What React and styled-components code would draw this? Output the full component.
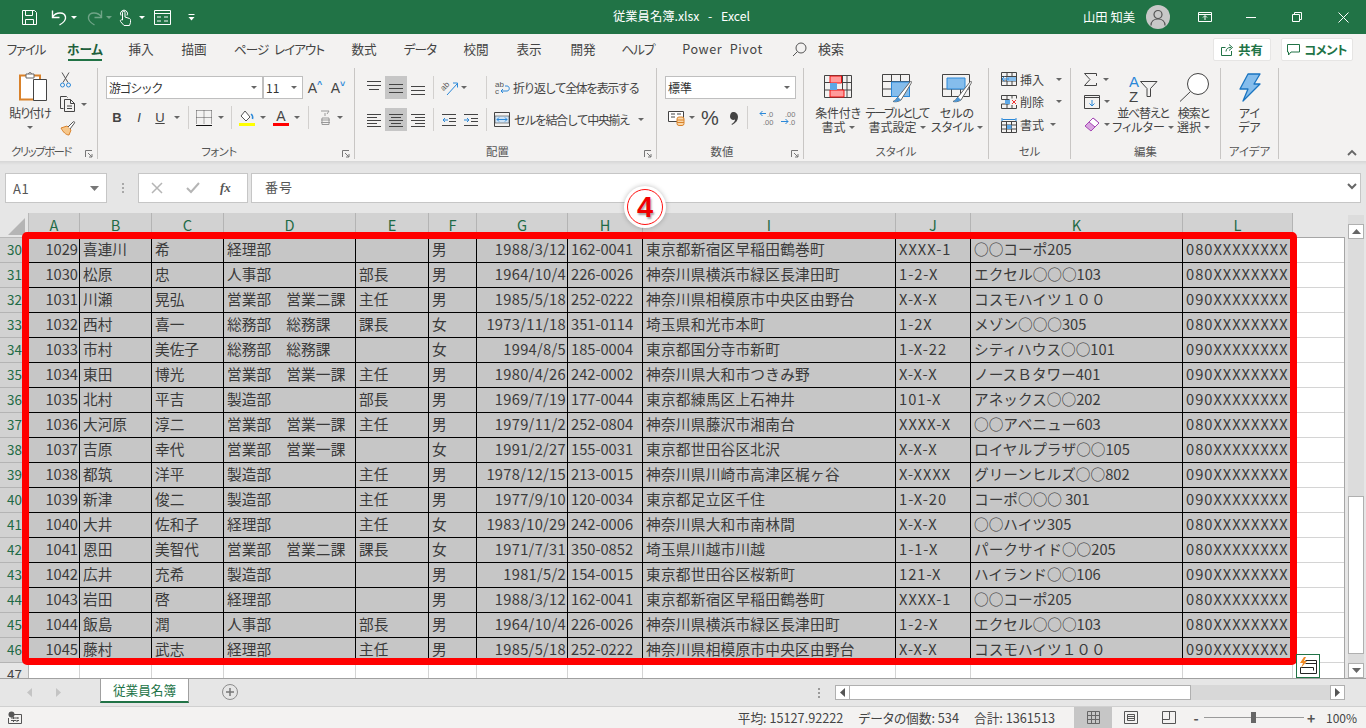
import React from "react";
import styled, { createGlobalStyle } from "styled-components";

const FONT = `"Noto Sans CJK JP", "Noto Sans", sans-serif`;

// name, width, right aligned, extra letter spacing
const COLUMNS = [
  ["A", 51, true, 0],
  ["B", 72, false, 0],
  ["C", 72, false, 0],
  ["D", 132, false, 0.15],
  ["E", 73, false, 0],
  ["F", 48, false, 0],
  ["G", 91, true, 0.3],
  ["H", 75, false, 0],
  ["I", 253, false, 0.25],
  ["J", 75, false, 1],
  ["K", 212, false, 0],
  ["L", 110, false, 1],
];

const ROWS = [
  [30, "1029", "喜連川", "希", "経理部", "", "男", "1988/3/12", "162-0041", "東京都新宿区早稲田鶴巻町", "XXXX-1", "○○コーポ205", "080XXXXXXXX"],
  [31, "1030", "松原", "忠", "人事部", "部長", "男", "1964/10/4", "226-0026", "神奈川県横浜市緑区長津田町", "1-2-X", "エクセル○○○103", "080XXXXXXXX"],
  [32, "1031", "川瀬", "晃弘", "営業部　営業二課", "主任", "男", "1985/5/18", "252-0222", "神奈川県相模原市中央区由野台", "X-X-X", "コスモハイツ１００", "090XXXXXXXX"],
  [33, "1032", "西村", "喜一", "総務部　総務課", "課長", "女", "1973/11/18", "351-0114", "埼玉県和光市本町", "1-2X", "メゾン○○○305", "080XXXXXXXX"],
  [34, "1033", "市村", "美佐子", "総務部　総務課", "", "女", "1994/8/5", "185-0004", "東京都国分寺市新町", "1-X-22", "シティハウス○○101", "090XXXXXXXX"],
  [35, "1034", "東田", "博光", "営業部　営業一課", "主任", "男", "1980/4/26", "242-0002", "神奈川県大和市つきみ野", "X-X-X", "ノースＢタワー401", "090XXXXXXXX"],
  [36, "1035", "北村", "平吉", "製造部", "部長", "男", "1969/7/19", "177-0044", "東京都練馬区上石神井", "101-X", "アネックス○○202", "090XXXXXXXX"],
  [37, "1036", "大河原", "淳二", "営業部　営業一課", "主任", "男", "1979/11/2", "252-0804", "神奈川県藤沢市湘南台", "XXXX-X", "○○アベニュー603", "080XXXXXXXX"],
  [38, "1037", "吉原", "幸代", "営業部　営業一課", "", "女", "1991/2/27", "155-0031", "東京都世田谷区北沢", "X-X-X", "ロイヤルプラザ○○105", "080XXXXXXXX"],
  [39, "1038", "都筑", "洋平", "製造部", "主任", "男", "1978/12/15", "213-0015", "神奈川県川崎市高津区梶ヶ谷", "X-XXXX", "グリーンヒルズ○○802", "090XXXXXXXX"],
  [40, "1039", "新津", "俊二", "製造部", "主任", "男", "1977/9/10", "120-0034", "東京都足立区千住", "1-X-20", "コーポ○○○ 301", "090XXXXXXXX"],
  [41, "1040", "大井", "佐和子", "経理部", "主任", "女", "1983/10/29", "242-0006", "神奈川県大和市南林間", "X-X-X", "○○ハイツ305", "080XXXXXXXX"],
  [42, "1041", "恩田", "美智代", "営業部　営業二課", "課長", "女", "1971/7/31", "350-0852", "埼玉県川越市川越", "1-1-X", "パークサイド○○205", "080XXXXXXXX"],
  [43, "1042", "広井", "充希", "製造部", "", "男", "1981/5/2", "154-0015", "東京都世田谷区桜新町", "121-X", "ハイランド○○106", "090XXXXXXXX"],
  [44, "1043", "岩田", "啓", "経理部", "", "男", "1988/3/12", "162-0041", "東京都新宿区早稲田鶴巻町", "XXXX-1", "○○コーポ205", "080XXXXXXXX"],
  [45, "1044", "飯島", "潤", "人事部", "部長", "男", "1964/10/4", "226-0026", "神奈川県横浜市緑区長津田町", "1-2-X", "エクセル○○○103", "080XXXXXXXX"],
  [46, "1045", "藤村", "武志", "経理部", "主任", "男", "1985/5/18", "252-0222", "神奈川県相模原市中央区由野台", "X-X-X", "コスモハイツ１００", "090XXXXXXXX"],
];

// label, width, active, letter spacing
const TABS = [
  ["ファイル", 52, false, -1.3],
  ["ホーム", 66, true, 0],
  ["挿入", 46, false, 0],
  ["描画", 60, false, 0],
  ["ページ レイアウト", 110, false, -1],
  ["数式", 60, false, 0],
  ["データ", 52, false, -0.8],
  ["校閲", 60, false, 0],
  ["表示", 46, false, 0],
  ["開発", 62, false, 0],
  ["ヘルプ", 48, false, -1],
  ["Power Pivot", 121, false, 0.6],
];

const GlobalStyle = createGlobalStyle`
  html, body {
    margin: 0;
    padding: 0;
    overflow: hidden;
    background: #e6e6e6;
  }
  * {
    box-sizing: border-box;
  }
`;

const Page = styled.div`
  position: relative;
  width: 1366px;
  height: 728px;
  overflow: hidden;
  font-family: ${FONT};
  color: #444;
  display: flex;
  flex-direction: column;
`;

/* title bar */
const TitleBar = styled.header`
  height: 34px;
  flex: none;
  background: #217346;
  color: #fff;
  display: flex;
  align-items: center;
  position: relative;
`;

const Qat = styled.div`
  display: flex;
  align-items: center;
  padding-left: 21px;
`;

const QatButton = styled.span`
  display: flex;
  align-items: center;
  margin-left: ${(p) => p.$ml || 0}px;
  opacity: ${(p) => (p.$off ? 0.35 : 1)};
`;

const WhiteCaret = styled.i`
  display: block;
  margin-left: ${(p) => p.$ml || 5}px;
  border: 3px solid transparent;
  border-top: 3px solid #fff;
  border-bottom: 0;
`;

const DocTitle = styled.div`
  position: absolute;
  left: 613px;
  top: 7px;
  font-size: 12.3px;
  line-height: 18px;
  white-space: pre;
  word-spacing: 1.6px;
`;

const UserArea = styled.div`
  margin-left: auto;
  display: flex;
  align-items: center;
  height: 34px;
`;

const UserName = styled.span`
  font-size: 12.3px;
  margin-right: 11px;
`;

const Avatar = styled.span`
  width: 24px;
  height: 24px;
  border-radius: 50%;
  background: #c8c8c8;
  display: flex;
  align-items: center;
  justify-content: center;
  margin-right: 12px;
`;

const WinButton = styled.span`
  width: 46px;
  display: flex;
  justify-content: center;
`;

/* tab strip */
const TabStrip = styled.nav`
  height: 32px;
  flex: none;
  background: #f3f2f1;
  display: flex;
  align-items: flex-start;
`;

const Tab = styled.span`
  width: ${(p) => p.$w}px;
  flex: none;
  height: 32px;
  display: flex;
  justify-content: center;
  position: relative;
  padding-top: 6px;
  font-size: 12.6px;
  line-height: 18px;
  font-feature-settings: "palt";
  letter-spacing: ${(p) => p.$ls || 0}px;
  word-spacing: 4px;
  font-weight: ${(p) => (p.$on ? 700 : 400)};
  color: ${(p) => (p.$on ? "#1f5f3c" : "#444")};
  white-space: pre;
`;

const TabMark = styled.b`
  position: absolute;
  bottom: 5px;
  left: 50%;
  width: 34px;
  margin-left: -17px;
  height: 2.5px;
  background: #217346;
`;

const SearchBox = styled.span`
  display: flex;
  align-items: center;
  gap: 11px;
  margin-left: 9px;
  padding-top: 6px;
  font-size: 13px;
  line-height: 18px;
`;

const ShareArea = styled.div`
  margin-left: auto;
  display: flex;
  gap: 10px;
  padding: 4px 13px 0 0;
`;

const ShareButton = styled.span`
  width: ${(p) => p.$w}px;
  height: 23px;
  background: #fff;
  border: 1px solid #e6e5e4;
  border-radius: 2px;
  color: #217346;
  font-weight: 700;
  font-size: 12.3px;
  font-feature-settings: "palt";
  letter-spacing: ${(p) => p.$ls || 0}px;
  display: flex;
  align-items: center;
  justify-content: center;
  gap: 4px;
`;

/* ribbon */
const Ribbon = styled.section`
  height: 95px;
  flex: none;
  background: #f3f2f1;
  display: flex;
  position: relative;
`;

const Group = styled.div`
  position: relative;
  width: ${(p) => p.$w}px;
  flex: none;
  height: 91px;
  margin-top: 2px;
  border-right: 1px solid #c8c6c4;
  display: flex;
  flex-direction: column;
`;

const GroupBody = styled.div`
  height: 75px;
  flex: none;
  display: flex;
  padding-left: ${(p) => p.$pl || 0}px;
  flex-direction: ${(p) => (p.$col ? "column" : "row")};
`;

const GroupLabel = styled.div`
  position: relative;
  height: 16px;
  font-size: 11.4px;
  line-height: 16px;
  text-align: center;
  color: #555;
  font-feature-settings: "palt";
  letter-spacing: ${(p) => p.$ls || 0}px;
  padding-right: ${(p) => p.$pr || 0}px;
`;

const Launcher = styled.svg`
  position: absolute;
  right: 4px;
  bottom: 1px;
`;

const Line = styled.div`
  display: flex;
  align-items: center;
  height: ${(p) => p.$h || 23}px;
  margin-top: ${(p) => p.$mt || 0}px;
`;

const IconButton = styled.span`
  width: ${(p) => p.$w || 22}px;
  height: 100%;
  flex: none;
  display: flex;
  align-items: center;
  justify-content: center;
  background: ${(p) => (p.$on ? "#c6c6c6" : "transparent")};
  color: #444;
  font-size: ${(p) => p.$fs || 12}px;
`;

const Caret = styled.i`
  display: block;
  flex: none;
  margin-left: ${(p) => p.$ml || 0}px;
  border: 3px solid transparent;
  border-top: 3px solid #666;
  border-bottom: 0;
`;

const CaretBox = styled.span`
  width: ${(p) => p.$w}px;
  flex: none;
  display: flex;
  justify-content: center;
`;

const Sep = styled.i`
  display: block;
  flex: none;
  width: 1px;
  height: 23px;
  background: #d2d0ce;
  margin: 0 ${(p) => p.$r ?? 4}px 0 ${(p) => p.$l ?? 4}px;
`;

const Combo = styled.div`
  width: ${(p) => p.$w}px;
  height: 23px;
  flex: none;
  background: #fff;
  border: 1px solid #bfbfbf;
  display: flex;
  align-items: center;
  justify-content: space-between;
  padding: 0 5px 0 2px;
  font-size: 12px;
  color: #333;
`;

const ComboText = styled.span`
  letter-spacing: ${(p) => p.$ls || 0}px;
`;

const BigButton = styled.div`
  width: ${(p) => p.$w}px;
  flex: none;
  display: flex;
  flex-direction: column;
  align-items: center;
  padding-top: 5px;
`;

const BigIcon = styled.div`
  height: 33px;
  display: flex;
  align-items: center;
  justify-content: center;
  padding-bottom: ${(p) => p.$pb || 0}px;
  padding-left: ${(p) => p.$pl || 0}px;
`;

const BigText = styled.div`
  font-size: 12px;
  line-height: 14px;
  height: 14px;
  white-space: nowrap;
  font-feature-settings: "palt";
  letter-spacing: ${(p) => p.$ls || 0}px;
  display: flex;
  align-items: center;
  gap: 3px;
  color: #444;
`;

const SmallCol = styled.div`
  display: flex;
  flex-direction: column;
  padding-left: ${(p) => p.$pl || 0}px;
  width: ${(p) => p.$w}px;
  flex: none;
`;

const SmallRow = styled.div`
  height: ${(p) => p.$h || 23}px;
  flex: none;
  display: flex;
  align-items: center;
  font-size: 12px;
  font-feature-settings: "palt";
  color: #444;
`;

const RowText = styled.span`
  margin-left: ${(p) => p.$ml || 3}px;
  white-space: nowrap;
  width: ${(p) => (p.$w ? `${p.$w}px` : "auto")};
  font-size: 12px;
  letter-spacing: ${(p) => p.$ls || 0}px;
`;

const RibbonDots = styled.div`
  position: absolute;
  right: 9px;
  bottom: 5px;
  line-height: 0;
`;

const Shade = styled.div`
  height: 4px;
  flex: none;
  background: linear-gradient(#d6d6d6, #e6e6e6);
`;

/* formula bar */
const FormulaBar = styled.div`
  height: 48px;
  flex: none;
  background: #e6e6e6;
  padding: 8px 5px 0 5px;
  display: flex;
  align-items: flex-start;
`;

const NameBox = styled.div`
  width: 102px;
  height: 30px;
  background: #fff;
  border: 1px solid #c6c6c6;
  display: flex;
  align-items: center;
  justify-content: space-between;
  padding: 0 7px;
  font-size: 13px;
  letter-spacing: 0.6px;
  color: #555;
`;

const Grip = styled.div`
  width: 31px;
  height: 30px;
  display: flex;
  flex-direction: column;
  align-items: center;
  justify-content: center;
  gap: 2px;
  i {
    display: block;
    width: 2px;
    height: 2px;
    background: #a8a8a8;
  }
`;

const FxBox = styled.div`
  width: 110px;
  height: 30px;
  background: #fff;
  border: 1px solid #c6c6c6;
  display: flex;
  align-items: center;
  padding-left: 12px;
  gap: 23px;
`;

const FxText = styled.span`
  font-family: "Liberation Serif", serif;
  font-style: italic;
  font-weight: 700;
  font-size: 13px;
  color: #555;
  margin-left: -3px;
`;

const FormulaInput = styled.div`
  margin-left: 3px;
  flex: 1;
  height: 30px;
  background: #fff;
  border: 1px solid #c6c6c6;
  display: flex;
  align-items: center;
  justify-content: space-between;
  padding: 0 3px 4px 13px;
  font-size: 13px;
  letter-spacing: 1px;
  color: #555;
`;

/* sheet */
const SheetArea = styled.main`
  height: 465px;
  flex: none;
  display: flex;
  background: #e6e6e6;
  position: relative;
`;

const Grid = styled.div`
  width: 1345px;
  flex: none;
  height: 465px;
  overflow: hidden;
  background: #fff;
  display: flex;
  flex-direction: column;
`;

const Row = styled.div`
  display: flex;
  flex: none;
  height: 25px;
`;

const HeadRow = styled(Row)`
  background: #e6e6e6;
`;

const Corner = styled.div`
  width: 29px;
  flex: none;
  background: #e6e6e6;
  border-right: 1px solid #b8b8b8;
  border-bottom: 1px solid #b8b8b8;
  display: flex;
  align-items: flex-end;
  justify-content: flex-end;
  padding: 0 3px 2px 0;
`;

const ColHead = styled.div`
  width: ${(p) => p.$w}px;
  flex: none;
  background: #d2d2d2;
  border-right: 1px solid #b4b4b4;
  border-bottom: 1px solid #b4b4b4;
  color: #1f6b46;
  font-size: 14.6px;
  line-height: 23px;
  text-align: center;
`;

const HeadGap = styled.div`
  flex: 1;
  background: #e6e6e6;
  border-bottom: 1px solid #a6a6a6;
`;

const RowHead = styled.div`
  width: 29px;
  flex: none;
  background: ${(p) => (p.$sel ? "#d2d2d2" : "#e6e6e6")};
  border-right: 1px solid #b4b4b4;
  border-bottom: 1px solid #b4b4b4;
  color: ${(p) => (p.$sel ? "#1f6b46" : "#444")};
  font-size: 13.4px;
  line-height: 22px;
  padding-left: 7px;
`;

const Cell = styled.div`
  width: ${(p) => p.$w}px;
  flex: none;
  height: 25px;
  background: ${(p) => (p.$sel ? "#c6c6c6" : "#fff")};
  border-right: 1px solid ${(p) => (p.$sel ? "#000" : "#d4d4d4")};
  border-bottom: 1px solid ${(p) => (p.$sel ? "#000" : "#d4d4d4")};
  font-size: 14.67px;
  line-height: 22px;
  color: #3a3a3a;
  letter-spacing: ${(p) => p.$ls || 0}px;
  white-space: pre;
  overflow: hidden;
  text-align: ${(p) => (p.$right ? "right" : "left")};
  padding: 0 ${(p) => (p.$right ? 1 : 0)}px 0 ${(p) => (p.$right ? 0 : 3)}px;
`;

const BlankCell = styled.div`
  flex: 1;
  height: 25px;
  border-bottom: 1px solid #d4d4d4;
  background: #fff;
`;

const VBar = styled.aside`
  flex: 1;
  display: flex;
  flex-direction: column;
  align-items: center;
  padding: 2px 3px 0 0;
  border-left: 1px solid #a6a6a6;
  margin-top: 24px;
  margin-left: -1px;
`;

const VTrack = styled.div`
  width: 16px;
  flex: 1;
  margin-top: -24px;
  margin-left: 3px;
  display: flex;
  flex-direction: column;
  background: #dcdcdc;
`;

const ScrollButton = styled.div`
  flex: none;
  width: ${(p) => p.$w || 16}px;
  height: ${(p) => p.$h || 16}px;
  background: #fff;
  border: 1px solid #b0b0b0;
  display: flex;
  align-items: center;
  justify-content: center;
`;

const VThumb = styled.div`
  height: 158px;
  margin-top: auto;
  background: #fff;
  border: 1px solid #b0b0b0;
`;

const VSpace = styled.div`
  height: 9px;
  flex: none;
`;

/* things lying over the sheet */
const SelectionFrame = styled.div`
  position: absolute;
  left: 22px;
  top: 19px;
  width: 1275px;
  height: 433px;
  border: 7px solid #ff0000;
  border-radius: 5px;
  pointer-events: none;
`;

const Callout = styled.div`
  position: absolute;
  left: 624px;
  top: -27px;
  width: 42px;
  height: 42px;
  border-radius: 50%;
  background: #fff;
  box-shadow: 0 0 5px rgba(0, 0, 0, 0.25);
  display: flex;
  align-items: center;
  justify-content: center;
  &::after {
    content: "";
    position: absolute;
    inset: 3px;
    border: 1.5px solid #ff1010;
    border-radius: 50%;
  }
`;

const CalloutNumber = styled.span`
  font-family: "Liberation Sans", sans-serif;
  font-weight: 700;
  font-size: 29px;
  line-height: 1;
  color: #f00000;
  text-shadow: 1px 2px 2px rgba(90, 90, 90, 0.55);
`;

const QuickAnalysis = styled.div`
  position: absolute;
  left: 1296px;
  top: 441px;
  width: 24px;
  height: 24px;
  background: #fff;
  border: 1px solid #217346;
  display: flex;
  align-items: center;
  justify-content: center;
`;

/* sheet tabs */
const SheetBar = styled.div`
  height: 28px;
  flex: none;
  background: #e6e6e6;
  border-top: 1px solid #a0a0a0;
  display: flex;
  align-items: flex-start;
`;

const SheetNav = styled.div`
  width: 100px;
  height: 27px;
  flex: none;
  display: flex;
  align-items: center;
  gap: 24px;
  padding-left: 27px;
`;

const SheetTab = styled.div`
  width: 89px;
  height: 25px;
  flex: none;
  margin-top: -1px;
  background: #fff;
  border: 1px solid #a0a0a0;
  border-bottom: 2px solid #217346;
  color: #217346;
  font-size: 12.6px;
  line-height: 21px;
  text-align: center;
`;

const AddSheet = styled.div`
  width: 16px;
  height: 16px;
  margin: 5px 0 0 33px;
  border-radius: 50%;
  border: 1.5px solid #8c8c8c;
  color: #777;
  display: flex;
  align-items: center;
  justify-content: center;
`;

const SplitDots = styled.div`
  margin-left: auto;
  width: 16px;
  height: 27px;
  display: flex;
  flex-direction: column;
  align-items: center;
  justify-content: center;
  gap: 2px;
  i {
    display: block;
    width: 2px;
    height: 2px;
    background: #9a9a9a;
  }
`;

const HBar = styled.div`
  width: 510px;
  height: 15px;
  margin: 6px 21px 0 8px;
  display: flex;
  background: #d8d8d8;
`;

const HThumb = styled.div`
  width: 341px;
  flex: none;
  background: #fff;
  border: 1px solid #b0b0b0;
  border-left: 0;
`;

const HFill = styled.div`
  flex: 1;
`;

/* status bar */
const StatusBar = styled.footer`
  height: 22px;
  flex: none;
  background: #f3f2f1;
  border-top: 1px solid #d0d0d0;
  display: flex;
  align-items: stretch;
  font-size: 12.7px;
  color: #444;
  padding-left: 8px;
`;

const MacroIcon = styled.span`
  display: flex;
  align-items: center;
`;

const StatusItems = styled.div`
  margin-left: auto;
  display: flex;
  align-items: center;
  gap: 15px;
  padding-right: 19px;
  white-space: pre;
  font-feature-settings: "palt";
`;

const ViewButton = styled.span`
  width: 38px;
  flex: none;
  display: flex;
  align-items: center;
  justify-content: center;
  background: ${(p) => (p.$on ? "#c6c6c6" : "transparent")};
`;

const Zoom = styled.div`
  display: flex;
  align-items: center;
  margin-left: 4px;
  width: 174px;
  flex: none;
`;

const ZoomTrack = styled.div`
  width: 100px;
  height: 1px;
  background: #9a9a9a;
  margin: 0 3px 0 4px;
  position: relative;
`;

const ZoomThumb = styled.b`
  position: absolute;
  left: 47px;
  top: -5px;
  width: 5px;
  height: 11px;
  background: #666;
`;

const ZoomSign = styled.span`
  width: 8px;
  flex: none;
  font-size: 14px;
  line-height: 1;
  font-weight: 700;
  text-align: center;
  color: #555;
`;

const ZoomValue = styled.span`
  margin-left: 11px;
  font-size: 12px;
`;

const ColorLetterUp = styled.span`
  font-family: "Liberation Sans", sans-serif;
  font-size: 14px;
  color: #444;
  display: flex;
`;

const Sup = styled.span`
  font-size: 9px;
  line-height: 9px;
  color: #2b88d8;
  font-weight: 700;
`;

const FontStyle = styled.span`
  font-family: "Liberation Sans", sans-serif;
  font-size: 13px;
  font-weight: ${(p) => (p.$b ? 700 : 400)};
  font-style: ${(p) => (p.$i ? "italic" : "normal")};
  text-decoration: ${(p) => (p.$u ? "underline" : "none")};
  color: #444;
`;

const ColorLetter = styled.div`
  font-family: "Liberation Sans", sans-serif;
  font-size: 14px;
  line-height: 12px;
  text-align: center;
  color: #444;
`;

const Swatch = styled.div`
  width: 16px;
  height: 3px;
  margin-top: 1px;
  background: #ff0000;
`;

const PercentText = styled.span`
  font-family: "Liberation Sans", sans-serif;
  font-size: 20px;
  line-height: 1;
  color: #444;
`;

/* icon drawings */
const Svg = ({ w, h, children, style, ...rest }) => (
  <svg
    width={w}
    height={h}
    viewBox={`0 0 ${w} ${h}`}
    fill="none"
    style={{ display: "block", flex: "none", overflow: "visible", ...style }}
    {...rest}
  >
    {children}
  </svg>
);

const INK = "#444";
const BLUE = "#2b88d8";

const SaveIcon = () => (
  <Svg w={17} h={17} stroke="#fff">
    <path d="M1.5 1.5h12l2 2v12h-14zM4.5 1.500v5h7v-5M4.500 15.500v-5h8v5" />
  </Svg>
);
const UndoIcon = ({ flip }) => (
  <Svg w={17} h={17} stroke="#fff" strokeWidth="1.4" style={{ transform: flip ? "scaleX(-1)" : "none" }}>
    <path d="M2.500 1.500v7h7M2.500 8C6 3 14.500 2.500 15.500 8c.6 3.500-2.500 6-6 8" />
  </Svg>
);
const TouchIcon = () => (
  <Svg w={14} h={18} stroke="#fff">
    <path d="M3 7.500a3.500 3.500 0 1 1 6 0M4.500 12V4.500a1.200 1.200 0 0 1 2.500 0V9l4.500 1.500c1 .5 1 1 1 2v2l-1 3H6l-3.500-4c-.8-1.200.8-2.200 2-1.500z" />
  </Svg>
);
const FormIcon = () => (
  <Svg w={17} h={15} stroke="#fff">
    <path d="M.5.500h16v14H.5zM.5 3.500h16M3 7h4M10 7h4M3 11h4M10 11h4" />
  </Svg>
);
const CustomizeIcon = () => (
  <Svg w={7} h={7} fill="#fff">
    <path d="M.5 0h6v1h-6zM.5 3h6L3.500 6.500z" />
  </Svg>
);
const RibbonModeIcon = () => (
  <Svg w={14} h={12} stroke="#fff">
    <path d="M.5 1.500h13v9H.5zM.5 3.500h13M7 9V5M5 6.500L7 4.500l2 2" />
  </Svg>
);
const MinIcon = () => (
  <Svg w={10} h={10} stroke="#fff">
    <path d="M0 5.500h10" />
  </Svg>
);
const RestoreIcon = () => (
  <Svg w={10} h={10} stroke="#fff">
    <path d="M.5 2.500h7v7h-7zM2.500 2.500v-2h7v7h-2" />
  </Svg>
);
const CloseIcon = () => (
  <Svg w={11} h={11} stroke="#fff">
    <path d="M.5.500l10 10M10.500.500l-10 10" />
  </Svg>
);
const PersonIcon = () => (
  <Svg w={16} h={17} stroke="#555" strokeWidth="1.200">
    <circle cx="8" cy="5.500" r="4" />
    <path d="M1 16.500c0-4 3-6.500 7-6.500s7 2.500 7 6.500" />
  </Svg>
);
const SearchIcon = () => (
  <Svg w={15} h={15} stroke="#555">
    <circle cx="9" cy="6" r="5" />
    <path d="M5.400 9.600L1 14" />
  </Svg>
);
const ShareIcon = () => (
  <Svg w={13} h={13} stroke="#217346">
    <path d="M10.500 8v4.500H.5v-8h4M5 8.500c0-2.500 2-4 4-4h1M8 1.500l3.500 3-3.500 3" />
  </Svg>
);
const CommentIcon = () => (
  <Svg w={13} h={13} stroke="#217346">
    <path d="M.5 1.500h12v7.500H4l-2.500 3V9h-1z" />
  </Svg>
);
const Launch = () => (
  <Launcher width="8" height="8" viewBox="0 0 8 8" fill="none" stroke="#777">
    <path d="M.5 7V.5H7M3 3l4 4M7 4v3H4" />
  </Launcher>
);
const PasteIcon = () => (
  <Svg w={28} h={33}>
    <path d="M1 4.500h20v24H1z" fill="#fff" stroke="#d9822b" strokeWidth="2" />
    <path d="M7 3h8v4H7z" fill="#fff" stroke="#666" />
    <path d="M9.500 3c0-2 3-2 3 0" stroke="#666" />
    <path d="M14.500 8.500h13v21h-13z" fill="#fff" stroke="#444" />
  </Svg>
);
const CutIcon = () => (
  <Svg w={11} h={16}>
    <path d="M2 .500l6 10M9 .500l-6 10" stroke="#555" />
    <circle cx="2.500" cy="13" r="2" stroke={BLUE} />
    <circle cx="8.500" cy="13" r="2" stroke={BLUE} />
  </Svg>
);
const CopyIcon = () => (
  <Svg w={16} h={16} stroke={INK}>
    <path d="M.5.500h6l1 1M.5.500v12h3" />
    <path d="M4.500 3.500h6l4 4v8h-10zM10.500 3.500v4h4M7 10h5M7 12.500h5" fill="#f3f2f1" />
  </Svg>
);
const PainterIcon = () => (
  <Svg w={16} h={16}>
    <path d="M1 8l6-2 4 4-2 5c-3 0-6-3-8-7z" fill="#f6c78b" stroke="#d9822b" />
    <path d="M8 7l5-5c1-1 2 0 1.500 1L10 9" stroke="#555" fill="#fff" />
  </Svg>
);
const BorderIcon = () => (
  <Svg w={16} h={16}>
    <path d="M.5 .5h15M.5 .5v14M15.500 .5v14M.5 7.500h15M8 .5v14" stroke="#555" strokeDasharray="1 1" />
    <path d="M0 15.500h16" stroke="#111" />
  </Svg>
);
const FillIcon = () => (
  <Svg w={16} h={16}>
    <path d="M6 1l5 6-4 4-5-5z" fill="#fff" stroke="#555" />
    <path d="M12 4c1.500 1 2 3 1.500 5" stroke={BLUE} strokeWidth="1.500" />
    <path d="M0 13h16v3H0z" fill="#ffff00" />
  </Svg>
);
const FontColorIcon = () => (
  <div>
    <ColorLetter>A</ColorLetter>
    <Swatch />
  </div>
);
const PhoneticIcon = () => (
  <Svg w={11} h={15} stroke="#999">
    <path d="M1 1h8l-2 3M5 3v3M1 10h9M1 12.500h9M2 8h7v6.500H2z" />
  </Svg>
);
const Bars = ({ lines }) => (
  <Svg w={14} h={14} stroke={INK}>
    {lines.map(([x1, x2, y], i) => (
      <path key={i} d={`M${x1} ${y + 0.5}H${x2}`} />
    ))}
  </Svg>
);
const ALIGN_TOP = [[0, 14, 0], [0, 14, 4], [2, 12, 8]];
const ALIGN_MID = [[0, 14, 3], [0, 14, 7], [0, 14, 11]];
const ALIGN_BOT = [[0, 14, 5], [0, 14, 9], [0, 14, 13]];
const ALIGN_L = [[0, 14, 1], [0, 10, 4], [0, 14, 7], [0, 10, 10], [0, 14, 13]];
const ALIGN_C = [[0, 14, 1], [2, 12, 4], [0, 14, 7], [2, 12, 10], [0, 14, 13]];
const ALIGN_R = [[0, 14, 1], [4, 14, 4], [0, 14, 7], [4, 14, 10], [0, 14, 13]];
const OrientIcon = () => (
  <Svg w={17} h={16}>
    <path d="M6 15L16 4M12 3h4.500v4.500" stroke={BLUE} />
    <text x="0" y="9" fontSize="8" fill="#555" fontFamily="Liberation Sans" transform="rotate(-45 4 7)">ab</text>
  </Svg>
);
const IndentIcon = ({ flip }) => (
  <Svg w={14} h={14}>
    <path d="M0 1.500h14M7 5.500h7M7 8.500h7M0 12.500h14" stroke={INK} />
    <path d={flip ? "M6 7H1M3 5L1 7l2 2" : "M0 7h5M3 5l2 2-2 2"} stroke={BLUE} />
  </Svg>
);
const WrapIcon = () => (
  <Svg w={16} h={15}>
    <text x="0" y="7" fontSize="8" fill="#555" fontFamily="Liberation Sans">ab</text>
    <text x="0" y="14" fontSize="8" fill="#555" fontFamily="Liberation Sans">c</text>
    <path d="M6 11h6c3 0 3-5 0-5H10M8 9l-2 2 2 2" stroke={BLUE} />
  </Svg>
);
const MergeIcon = () => (
  <Svg w={16} h={15}>
    <path d="M.5.500h15v14H.5z" stroke={INK} />
    <path d="M1 4h14v7H1z" fill="#cfe4f7" stroke="#444" strokeWidth=".6" />
    <path d="M3 7.500h10M5 5.500l-2 2 2 2M11 5.500l2 2-2 2" stroke={BLUE} />
  </Svg>
);
const AccountingIcon = () => (
  <Svg w={17} h={16}>
    <path d="M.5 1.500h15v10H.5z" stroke={INK} fill="#fff" />
    <path d="M3 4h4M3 7h4M9 4h4" stroke={INK} />
    <rect x="9" y="7" width="7" height="8.500" rx="2" fill="#f9d7a8" stroke="#d9822b" />
    <path d="M9 10h7M9 12.500h7" stroke="#d9822b" />
  </Svg>
);
const CommaIcon = () => (
  <Svg w={9} h={14} fill="#444">
    <path d="M4 1c3 0 5 2 5 5 0 3-2 6-6 8l-.5-1C5 11.500 6 10 6 8.500 4 9.500 1 8.500 1 5.500 1 3 2.500 1 4 1z" />
  </Svg>
);
const MoreDecimal = () => (
  <Svg w={16} h={15}>
    <path d="M7 3.500H1M3.500 1L1 3.500 3.500 6" stroke={BLUE} />
    <text x="8" y="7" fontSize="7.500" fill="#777" fontFamily="Liberation Sans">.0</text>
    <text x="4" y="14.500" fontSize="7.500" fill="#777" fontFamily="Liberation Sans">.00</text>
  </Svg>
);
const LessDecimal = () => (
  <Svg w={16} h={15}>
    <text x="4" y="7" fontSize="7.500" fill="#777" fontFamily="Liberation Sans">.00</text>
    <path d="M0 11.500h7M4.500 9L7 11.500 4.500 14" stroke={BLUE} />
    <text x="8" y="14.500" fontSize="7.500" fill="#777" fontFamily="Liberation Sans">.0</text>
  </Svg>
);
const CondIcon = () => (
  <Svg w={28} h={23}>
    <path d="M.5.500h27v22H.5zM.5 7.500h27M.5 15h27M9.500.5v22M18.500.5v22M23 .5v22" stroke="#444" />
    <path d="M6 1h11.500v7H6z" fill="#ff9a9a" stroke="#e11" />
    <path d="M6 15h14v7H6z" fill="#ff9a9a" stroke="#e11" />
    <path d="M6 8h7v7H6z" fill="#5ea8e6" />
  </Svg>
);
const TableIcon = () => (
  <Svg w={30} h={28}>
    <path d="M.5.500h27v22H.5zM.5 7.500h27M.5 15h27M9.500.5v22M18.500.5v22" stroke="#444" />
    <path d="M9.500 8h18v14.500h-18z" fill="#85bdec" stroke="#2b88d8" />
    <path d="M16 23L28 8c1.500-1.500 2 0 1 1.500L19 26c-3 2-6 2-8 1.500 3-1 3-3 5-4.500z" fill="#fff" stroke="#666" />
    <path d="M11 27.500c3-1 3-3 5-4.500l3 3c-3 2-6 2-8 1.500z" fill="#4a96d6" />
  </Svg>
);
const StyleIcon = () => (
  <Svg w={30} h={28}>
    <path d="M.5.500h27v22H.5zM.5 15h27M9.500 15v7.500M18.500 15v7.500" stroke="#444" />
    <path d="M5 4h18v11H5z" fill="#85bdec" stroke="#2b88d8" />
    <path d="M16 23L28 8c1.500-1.500 2 0 1 1.500L19 26c-3 2-6 2-8 1.500 3-1 3-3 5-4.500z" fill="#fff" stroke="#666" />
    <path d="M11 27.500c3-1 3-3 5-4.500l3 3c-3 2-6 2-8 1.500z" fill="#4a96d6" />
  </Svg>
);
const InsertCellIcon = () => (
  <Svg w={16} h={14}>
    <path d="M.5.500h15v13H.5zM.5 4.500h15M.5 9h15M6 .5v13M11 .5v13" stroke="#444" />
    <path d="M6 5h9v4H6z" fill="#85bdec" />
    <path d="M8 7H1M3.500 4.500L1 7l2.500 2.500" stroke={BLUE} />
  </Svg>
);
const DeleteCellIcon = () => (
  <Svg w={16} h={14}>
    <path d="M.5.500h15M.5 13.500h15M.5.500v4M.5 9v4.500M15.500.5v3M15.500 10v3.500M.5 4.500h8M.5 9h8M6 .5v4M6 9v4.500M11 .5v3M11 10v3.500" stroke="#444" />
    <path d="M4 5h5v4H4z" fill="#5ea8e6" />
    <path d="M11 5l4 4M15 5l-4 4" stroke="#e33" />
  </Svg>
);
const FormatCellIcon = () => (
  <Svg w={16} h={16}>
    <path d="M1.500 2.500h13" stroke={BLUE} />
    <path d="M1 1v3M15 1v3" stroke={BLUE} />
    <path d="M.5 4.500h15v11H.5zM.5 8h15M.5 12h15M5.500 4.500v11M10.500 4.500v11" stroke="#444" />
    <path d="M6 8h4.500v4H6z" fill="#5ea8e6" />
  </Svg>
);
const SumIcon = () => (
  <Svg w={13} h={13} stroke={INK}>
    <path d="M12.500 3V.5H.5l5.500 6-5.500 6h12V10" />
  </Svg>
);
const FillDownIcon = () => (
  <Svg w={16} h={14}>
    <path d="M.5.500h15v13H.5z" stroke="#444" />
    <path d="M.5 2.500h15" stroke="#444" />
    <path d="M8 5v6M5.500 8.500L8 11l2.500-2.500" stroke={BLUE} />
  </Svg>
);
const EraseIcon = () => (
  <Svg w={16} h={15}>
    <path d="M1 9l8-8 6 5-8 8z" fill="#d9a6e0" stroke="#a548b5" />
    <path d="M5 5l6 5 4-4-6-5z" fill="#fff" stroke="#a548b5" />
  </Svg>
);
const SortIcon = () => (
  <Svg w={29} h={28}>
    <text x="0" y="13" fontSize="15" fill="#2b88d8" fontFamily="Liberation Sans">A</text>
    <text x="0" y="28" fontSize="15" fill="#444" fontFamily="Liberation Sans">Z</text>
    <path d="M11.500 7.500H28l-6.500 7v8h-3.500v-8z" stroke="#444" />
  </Svg>
);
const FindIcon = () => (
  <Svg w={30} h={29} stroke="#444">
    <circle cx="19" cy="11" r="10.500" fill="#fff" />
    <path d="M11.500 18.500L1 28.500" />
  </Svg>
);
const BoltIcon = () => (
  <Svg w={22} h={29}>
    <path d="M9 1h12l-6 10h6L4 28l5-12H1z" fill="#85bdec" stroke="#1a74c0" strokeWidth="1.300" strokeLinejoin="round" />
  </Svg>
);
const CollapseIcon = () => (
  <Svg w={10} h={6} stroke="#666" strokeWidth="1.800">
    <path d="M1 5l4-4 4 4" />
  </Svg>
);
const XMark = () => (
  <Svg w={12} h={12} stroke="#b5b5b5" strokeWidth="1.500">
    <path d="M1 1l10 10M11 1L1 11" />
  </Svg>
);
const CheckMark = () => (
  <Svg w={14} h={12} stroke="#b5b5b5" strokeWidth="2">
    <path d="M1 6l4 4 8-9" />
  </Svg>
);
const ChevronDown = () => (
  <Svg w={10} h={7} stroke="#666" strokeWidth="2">
    <path d="M1 1l4 4 4-4" />
  </Svg>
);
const CornerMark = () => (
  <Svg w={17} h={17} fill="#b5b5b5">
    <path d="M17 0v17H0z" />
  </Svg>
);
const Triangle = ({ dir = "up", color = "#666" }) => {
  const d = { up: "M0 5L4.500 0 9 5z", down: "M0 0h9L4.500 5z", left: "M5 0v9L0 4.500z", right: "M0 0v9l5-4.500z" }[dir];
  const vertical = dir === "up" || dir === "down";
  return (
    <Svg w={vertical ? 9 : 5} h={vertical ? 5 : 9} fill={color}>
      <path d={d} />
    </Svg>
  );
};
const QuickIcon = () => (
  <Svg w={20} h={20}>
    <path d="M7.500 4.500h11v13H2.500v-6h13v3" stroke="#222" />
    <path d="M7.500 7.500h11" stroke="#222" />
    <path d="M6 1L2 7h3L3 12l6-7H6l2-4z" fill="#f08a24" />
  </Svg>
);
const PlusIcon = () => (
  <Svg w={8} h={8} stroke="#777" strokeWidth="1.500">
    <path d="M4 0v8M0 4h8" />
  </Svg>
);
const MacroGlyph = () => (
  <Svg w={14} h={13}>
    <circle cx="3.500" cy="3.500" r="3" fill="#555" />
    <path d="M4 3.500h9.500v9H.5V7" stroke="#555" />
    <path d="M3 7h9M3 9.500h9M5.500 6v6M9 6v6" stroke="#555" strokeDasharray="2 1" />
  </Svg>
);
const NormalViewIcon = () => (
  <Svg w={13} h={13} stroke="#666">
    <path d="M.5.500h12v12H.5zM.5 4.500h12M.5 8.500h12M4.500.5v12M8.500.5v12" />
  </Svg>
);
const PageViewIcon = () => (
  <Svg w={14} h={13} stroke="#555">
    <path d="M.5.500h13v12H.5zM3.500 3.500h7v6h-7zM3.500 5.500h7M3.500 7.500h7" />
  </Svg>
);
const BreakViewIcon = () => (
  <Svg w={14} h={13} stroke="#555">
    <path d="M.5.500h13v12H.5zM.5 8.500h7v-8" />
  </Svg>
);

function TitleRow() {
  return (
    <TitleBar>
      <Qat>
        <QatButton><SaveIcon /></QatButton>
        <QatButton $ml={12}><UndoIcon /><WhiteCaret $ml={4} /></QatButton>
        <QatButton $ml={10} $off><UndoIcon flip /><WhiteCaret $ml={2} /></QatButton>
        <QatButton $ml={6}><TouchIcon /><WhiteCaret $ml={7} /></QatButton>
        <QatButton $ml={9}><FormIcon /></QatButton>
        <QatButton $ml={17}><CustomizeIcon /></QatButton>
      </Qat>
      <DocTitle>{"従業員名簿.xlsx  -  Excel"}</DocTitle>
      <UserArea>
        <UserName>山田 知美</UserName>
        <Avatar><PersonIcon /></Avatar>
        <WinButton><RibbonModeIcon /></WinButton>
        <WinButton><MinIcon /></WinButton>
        <WinButton><RestoreIcon /></WinButton>
        <WinButton><CloseIcon /></WinButton>
      </UserArea>
    </TitleBar>
  );
}

function TabRow() {
  return (
    <TabStrip>
      {TABS.map(([label, w, on, ls]) => (
        <Tab key={label} $w={w} $on={on} $ls={ls}>
          {label}
          {on && <TabMark />}
        </Tab>
      ))}
      <SearchBox>
        <SearchIcon />
        検索
      </SearchBox>
      <ShareArea>
        <ShareButton $w={58}><ShareIcon />共有</ShareButton>
        <ShareButton $w={72} $ls={-0.5}><CommentIcon />コメント</ShareButton>
      </ShareArea>
    </TabStrip>
  );
}

function RibbonRow() {
  return (
    <Ribbon>
      <Group $w={98}>
        <GroupBody>
          <BigButton $w={60}>
            <BigIcon $pb={4} $pl={5}><PasteIcon /></BigIcon>
            <BigText $ls={-1}>貼り付け</BigText>
            <BigText><Caret /></BigText>
          </BigButton>
          <SmallCol $pl={0}>
            <SmallRow $h={24}><CutIcon /></SmallRow>
            <SmallRow $h={24}><CopyIcon /><Caret $ml={5} /></SmallRow>
            <SmallRow $h={24}><PainterIcon /></SmallRow>
          </SmallCol>
        </GroupBody>
        <GroupLabel $pr={15} $ls={-1.5}>クリップボード<Launch /></GroupLabel>
      </Group>

      <Group $w={257}>
        <GroupBody $col $pl={8}>
          <Line $mt={8}>
            <Combo $w={157}><ComboText $ls={-1.4}>游ゴシック</ComboText><Caret /></Combo>
            <Combo $w={40}><ComboText>11</ComboText><Caret /></Combo>
            <IconButton $w={24} $fs={13}><ColorLetterUp>A<Sup>^</Sup></ColorLetterUp></IconButton>
            <IconButton $fs={13}><ColorLetterUp>A<Sup>˅</Sup></ColorLetterUp></IconButton>
          </Line>
          <Line $h={25} $mt={6}>
            <IconButton><FontStyle $b>B</FontStyle></IconButton>
            <IconButton><FontStyle $i>I</FontStyle></IconButton>
            <IconButton $w={20}><FontStyle $u>U</FontStyle></IconButton>
            <CaretBox $w={14}><Caret /></CaretBox>
            <Sep />
            <IconButton><BorderIcon /></IconButton>
            <CaretBox $w={11}><Caret /></CaretBox>
            <Sep $l={5} $r={5} />
            <IconButton $w={20}><FillIcon /></IconButton>
            <CaretBox $w={12}><Caret /></CaretBox>
            <IconButton $w={24}><FontColorIcon /></IconButton>
            <CaretBox $w={8}><Caret /></CaretBox>
            <Sep $l={7} />
            <IconButton $w={24}><PhoneticIcon /></IconButton>
            <CaretBox $w={6}><Caret /></CaretBox>
          </Line>
        </GroupBody>
        <GroupLabel $pr={14} $ls={-0.5}>フォント<Launch /></GroupLabel>
      </Group>

      <Group $w={302}>
        <GroupBody $col $pl={8}>
          <Line $mt={8}>
            <IconButton><Bars lines={ALIGN_TOP} /></IconButton>
            <IconButton $on><Bars lines={ALIGN_MID} /></IconButton>
            <IconButton><Bars lines={ALIGN_BOT} /></IconButton>
            <Sep />
            <IconButton><OrientIcon /></IconButton>
            <CaretBox $w={8}><Caret /></CaretBox>
            <Sep $l={18} $r={8} />
            <WrapIcon />
            <RowText $ml={2} $ls={-1.5}>折り返して全体を表示する</RowText>
          </Line>
          <Line $mt={9}>
            <IconButton><Bars lines={ALIGN_L} /></IconButton>
            <IconButton $on><Bars lines={ALIGN_C} /></IconButton>
            <IconButton><Bars lines={ALIGN_R} /></IconButton>
            <Sep />
            <IconButton><IndentIcon flip /></IconButton>
            <IconButton><IndentIcon /></IconButton>
            <Sep $r={7} />
            <MergeIcon />
            <RowText $ml={4} $ls={-1.5}>セルを結合して中央揃え</RowText>
            <Caret $ml={9} />
          </Line>
        </GroupBody>
        <GroupLabel $pr={16}>配置<Launch /></GroupLabel>
      </Group>

      <Group $w={147}>
        <GroupBody $col $pl={8}>
          <Line $mt={8}>
            <Combo $w={131}><ComboText>標準</ComboText><Caret /></Combo>
          </Line>
          <Line $h={25} $mt={6}>
            <IconButton><AccountingIcon /></IconButton>
            <CaretBox $w={10}><Caret /></CaretBox>
            <IconButton $w={26}><PercentText>%</PercentText></IconButton>
            <IconButton $w={20}><CommaIcon /></IconButton>
            <Sep />
            <IconButton $w={30}><MoreDecimal /></IconButton>
            <IconButton $w={14}><LessDecimal /></IconButton>
          </Line>
        </GroupBody>
        <GroupLabel $pr={16}>数値<Launch /></GroupLabel>
      </Group>

      <Group $w={185}>
        <GroupBody $pl={8}>
          <BigButton $w={52}>
            <BigIcon $pb={6}><CondIcon /></BigIcon>
            <BigText $ls={-0.3}>条件付き</BigText>
            <BigText>書式<Caret /></BigText>
          </BigButton>
          <BigButton $w={66}>
            <BigIcon $pb={4}><TableIcon /></BigIcon>
            <BigText $ls={-1.7}>テーブルとして</BigText>
            <BigText>書式設定<Caret /></BigText>
          </BigButton>
          <BigButton $w={54}>
            <BigIcon $pb={4}><StyleIcon /></BigIcon>
            <BigText>セルの</BigText>
            <BigText>スタイル<Caret /></BigText>
          </BigButton>
        </GroupBody>
        <GroupLabel>スタイル</GroupLabel>
      </Group>

      <Group $w={82}>
        <GroupBody $col $pl={12}>
          <SmallRow $h={22}><InsertCellIcon /><RowText $w={36}>挿入</RowText><Caret /></SmallRow>
          <SmallRow><DeleteCellIcon /><RowText $w={36}>削除</RowText><Caret /></SmallRow>
          <SmallRow><FormatCellIcon /><RowText $w={30}>書式</RowText><Caret /></SmallRow>
        </GroupBody>
        <GroupLabel>セル</GroupLabel>
      </Group>

      <Group $w={150}>
        <GroupBody>
          <SmallCol $w={46} $pl={13}>
            <SmallRow $h={22}><SumIcon /><Caret $ml={6} /></SmallRow>
            <SmallRow><FillDownIcon /><Caret $ml={4} /></SmallRow>
            <SmallRow><EraseIcon /><Caret $ml={4} /></SmallRow>
          </SmallCol>
          <BigButton $w={52}>
            <BigIcon $pb={4}><SortIcon /></BigIcon>
            <BigText $ls={-1.2}>並べ替えと</BigText>
            <BigText>フィルター<Caret /></BigText>
          </BigButton>
          <BigButton $w={49}>
            <BigIcon $pb={4}><FindIcon /></BigIcon>
            <BigText $ls={-1}>検索と</BigText>
            <BigText>選択<Caret /></BigText>
          </BigButton>
        </GroupBody>
        <GroupLabel>編集</GroupLabel>
      </Group>

      <Group $w={58}>
        <GroupBody>
          <BigButton $w={57}>
            <BigIcon $pb={4}><BoltIcon /></BigIcon>
            <BigText>アイ</BigText>
            <BigText>デア</BigText>
          </BigButton>
        </GroupBody>
        <GroupLabel>アイデア</GroupLabel>
      </Group>
      <RibbonDots><CollapseIcon /></RibbonDots>
    </Ribbon>
  );
}

function FormulaRow() {
  return (
    <FormulaBar>
      <NameBox>
        A1
        <Triangle dir="down" color="#777" />
      </NameBox>
      <Grip><i /><i /><i /></Grip>
      <FxBox>
        <XMark />
        <CheckMark />
        <FxText>fx</FxText>
      </FxBox>
      <FormulaInput>
        番号
        <ChevronDown />
      </FormulaInput>
    </FormulaBar>
  );
}

function Sheet() {
  return (
    <SheetArea>
      <Grid>
        <HeadRow>
          <Corner><CornerMark /></Corner>
          {COLUMNS.map(([name, w]) => (
            <ColHead key={name} $w={w}>{name}</ColHead>
          ))}
          <HeadGap />
        </HeadRow>
        {ROWS.map(([num, ...cells]) => (
          <Row key={num}>
            <RowHead $sel>{num}</RowHead>
            {cells.map((text, i) => (
              <Cell key={i} $sel $w={COLUMNS[i][1]} $right={COLUMNS[i][2]} $ls={COLUMNS[i][3]}>{text}</Cell>
            ))}
            <BlankCell />
          </Row>
        ))}
        <Row>
          <RowHead>47</RowHead>
          {COLUMNS.map(([name, w]) => (
            <Cell key={name} $w={w} />
          ))}
          <BlankCell />
        </Row>
      </Grid>
      <VBar>
        <VTrack>
          <VSpace />
          <ScrollButton $h={15}><Triangle dir="up" /></ScrollButton>
          <VThumb />
          <VSpace />
          <ScrollButton $h={15}><Triangle dir="down" /></ScrollButton>
        </VTrack>
      </VBar>
      <SelectionFrame />
      <Callout><CalloutNumber>4</CalloutNumber></Callout>
      <QuickAnalysis><QuickIcon /></QuickAnalysis>
    </SheetArea>
  );
}

function SheetTabs() {
  return (
    <SheetBar>
      <SheetNav>
        <Triangle dir="left" color="#c4c4c4" />
        <Triangle dir="right" color="#c4c4c4" />
      </SheetNav>
      <SheetTab>従業員名簿</SheetTab>
      <AddSheet><PlusIcon /></AddSheet>
      <SplitDots><i /><i /><i /></SplitDots>
      <HBar>
        <ScrollButton $w={15} $h={15}><Triangle dir="left" color="#555" /></ScrollButton>
        <HThumb />
        <HFill />
        <ScrollButton $w={15} $h={15}><Triangle dir="right" color="#555" /></ScrollButton>
      </HBar>
    </SheetBar>
  );
}

function Status() {
  return (
    <StatusBar>
      <MacroIcon><MacroGlyph /></MacroIcon>
      <StatusItems>
        <span>平均: 15127.92222</span>
        <span>データの個数: 534</span>
        <span>合計: 1361513</span>
      </StatusItems>
      <ViewButton $on><NormalViewIcon /></ViewButton>
      <ViewButton><PageViewIcon /></ViewButton>
      <ViewButton><BreakViewIcon /></ViewButton>
      <Zoom>
        <ZoomSign>-</ZoomSign>
        <ZoomTrack><ZoomThumb /></ZoomTrack>
        <ZoomSign>+</ZoomSign>
        <ZoomValue>100%</ZoomValue>
      </Zoom>
    </StatusBar>
  );
}

export default function App() {
  return (
    <>
      <GlobalStyle />
      <Page>
        <TitleRow />
        <TabRow />
        <RibbonRow />
        <Shade />
        <FormulaRow />
        <Sheet />
        <SheetTabs />
        <Status />
      </Page>
    </>
  );
}
